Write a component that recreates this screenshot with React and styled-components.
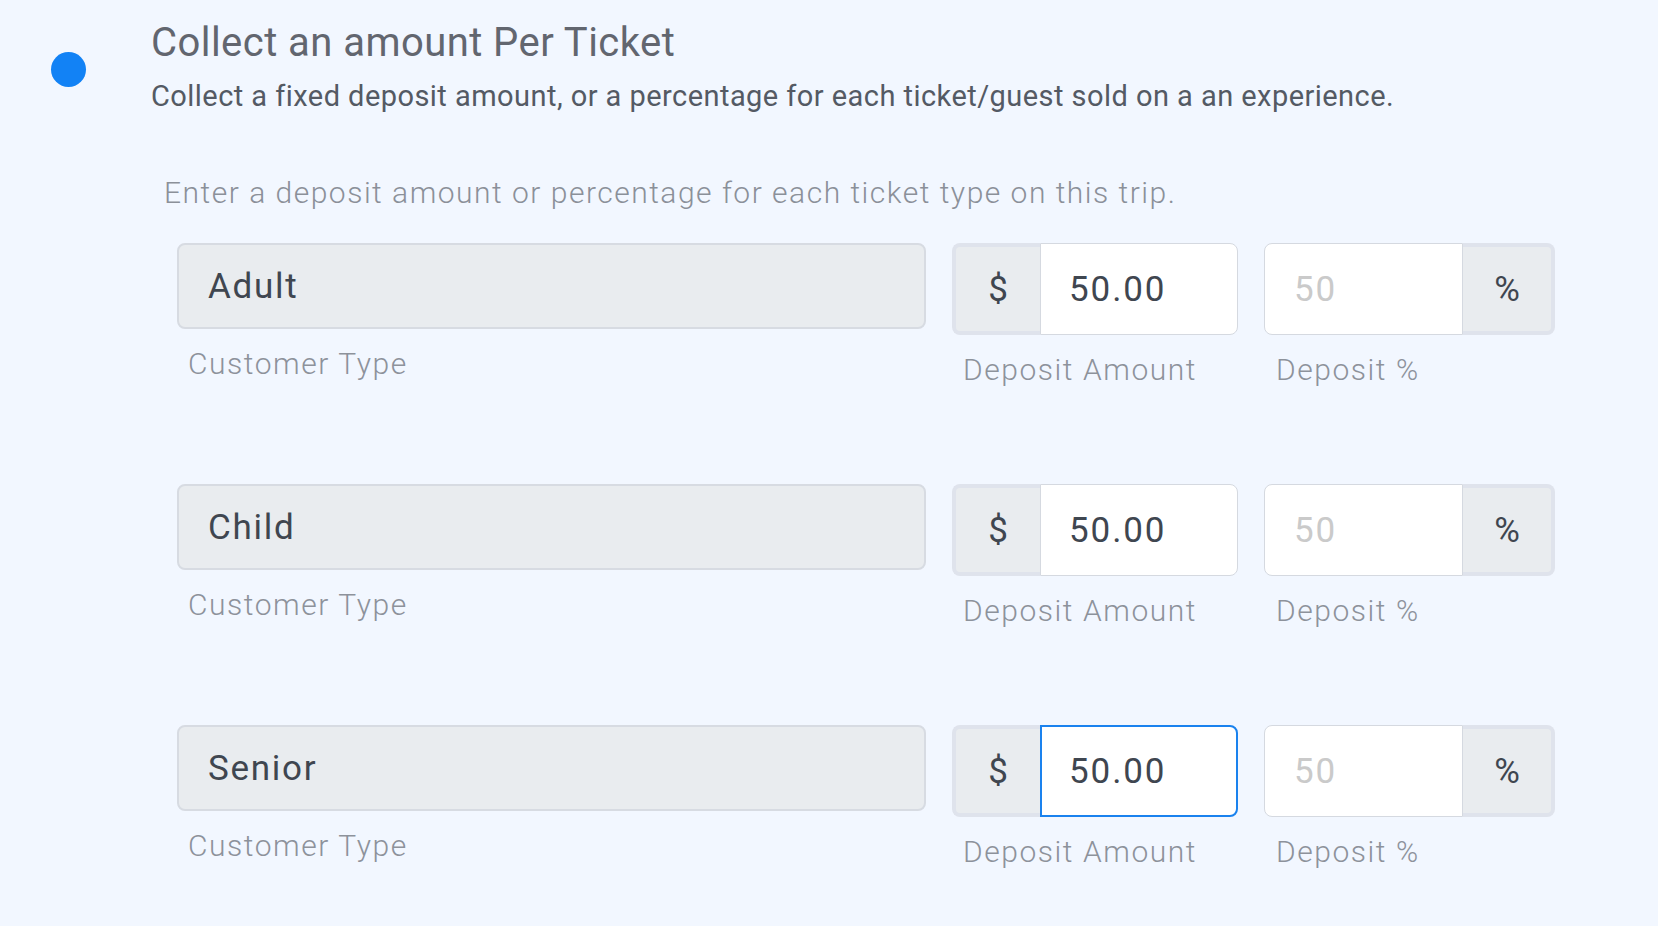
import styled, { createGlobalStyle } from 'styled-components'

const GlobalStyle = createGlobalStyle`
    body {
        margin:0;
        background-color:#f2f7ff;
        font-family:Roboto, "Liberation Sans", Arial, sans-serif;
    }
`
const Page = styled.div`
    min-height:926px;
    padding-top:19px;
    box-sizing:border-box;
    background-color:#f2f7ff;
`
const Header = styled.div`
    display:flex;
    align-items:center;
    padding-left:51px;
    gap:65px;
`
const Dot = styled.div`
    width:35px;
    height:35px;
    border-radius:50%;
    background-color:#1282f5;
    flex-shrink:0;
    margin-top:6px;
`
const HeaderText = styled.div`
    display:flex;
    flex-direction:column;
    gap:12px;
`
const Title = styled.h1`
    margin:0;
    font-size:40px;
    line-height:48px;
    font-weight:400;
    letter-spacing:0.45px;
    color:#62666f;
`
const Desc = styled.div`
    font-size:29px;
    line-height:34px;
    font-weight:400;
    letter-spacing:0.45px;
    color:#545a64;
`
const Helper = styled.div`
    margin-top:62px;
    padding-left:164px;
    font-size:30px;
    line-height:36px;
    font-weight:300;
    letter-spacing:1.5px;
    color:#8b9099;
`
const Rows = styled.div`
    margin-top:32px;
    padding-left:177px;
    display:flex;
    flex-direction:column;
    gap:96px;
`
const Row = styled.div`
    display:grid;
    grid-template-columns:749px 286px 291px;
    column-gap:26px;
    align-items:start;
`
const Field = styled.div`
    display:flex;
    flex-direction:column;
`
const Label = styled.div`
    margin-top:17px;
    padding-left:${p => p.$indent}px;
    font-size:30px;
    line-height:36px;
    font-weight:300;
    letter-spacing:1.55px;
    color:#8d929b;
`
const TypeBox = styled.div`
    height:86px;
    box-sizing:border-box;
    display:flex;
    align-items:center;
    padding-left:29px;
    background-color:#e9ecef;
    border:2px solid #d7dbe2;
    border-radius:8px;
    font-size:35px;
    letter-spacing:1.7px;
    color:#3f4650;
`
const Group = styled.div`
    display:flex;
    height:92px;
`
const Addon = styled.div`
    width:${p => p.$width}px;
    box-sizing:border-box;
    display:flex;
    align-items:center;
    justify-content:center;
    background-color:#e9ecef;
    border:4px solid #dfe3ec;
    border-${p => p.$side === 'left' ? 'right' : 'left'}:none;
    border-radius:${p => p.$side === 'left' ? '8px 0 0 8px' : '0 8px 8px 0'};
    font-size:35px;
    color:#3f4650;
`
const Input = styled.input`
    flex:1;
    min-width:0;
    box-sizing:border-box;
    height:92px;
    margin:0;
    padding:0 0 0 ${p => p.$pad}px;
    background-color:#fff;
    border:${p => p.$focused ? '2px solid #1a82ee' : '1px solid #d5d9e0'};
    border-radius:${p => p.$side === 'right' ? '0 8px 8px 0' : '8px 0 0 8px'};
    font-family:Roboto, "Liberation Sans", Arial, sans-serif;
    font-size:35px;
    letter-spacing:1.9px;
    color:#3f4650;
    outline:none;
    &::placeholder {
        color:#cacaca;
    }
`

const tickets = [
    { name: 'Adult', amount: '50.00' },
    { name: 'Child', amount: '50.00' },
    { name: 'Senior', amount: '50.00', focused: true },
]

const App = () => {
    return (
        <Page>
            <GlobalStyle />
            <Header>
                <Dot />
                <HeaderText>
                    <Title>Collect an amount Per Ticket</Title>
                    <Desc>Collect a fixed deposit amount, or a percentage for each ticket/guest sold on a an experience.</Desc>
                </HeaderText>
            </Header>
            <Helper>Enter a deposit amount or percentage for each ticket type on this trip.</Helper>
            <Rows>
                {tickets.map(t => (
                    <Row key={t.name}>
                        <Field>
                            <TypeBox>{t.name}</TypeBox>
                            <Label $indent={11}>Customer Type</Label>
                        </Field>
                        <Field>
                            <Group>
                                <Addon $width={88} $side="left">$</Addon>
                                <Input $side="right" $pad={t.focused ? 27 : 28} $focused={t.focused} value={t.amount} readOnly />
                            </Group>
                            <Label $indent={11}>Deposit Amount</Label>
                        </Field>
                        <Field>
                            <Group>
                                <Input $side="left" $pad={29} placeholder="50" readOnly />
                                <Addon $width={92} $side="right">%</Addon>
                            </Group>
                            <Label $indent={12}>Deposit %</Label>
                        </Field>
                    </Row>
                ))}
            </Rows>
        </Page>
    )
}

export default App
